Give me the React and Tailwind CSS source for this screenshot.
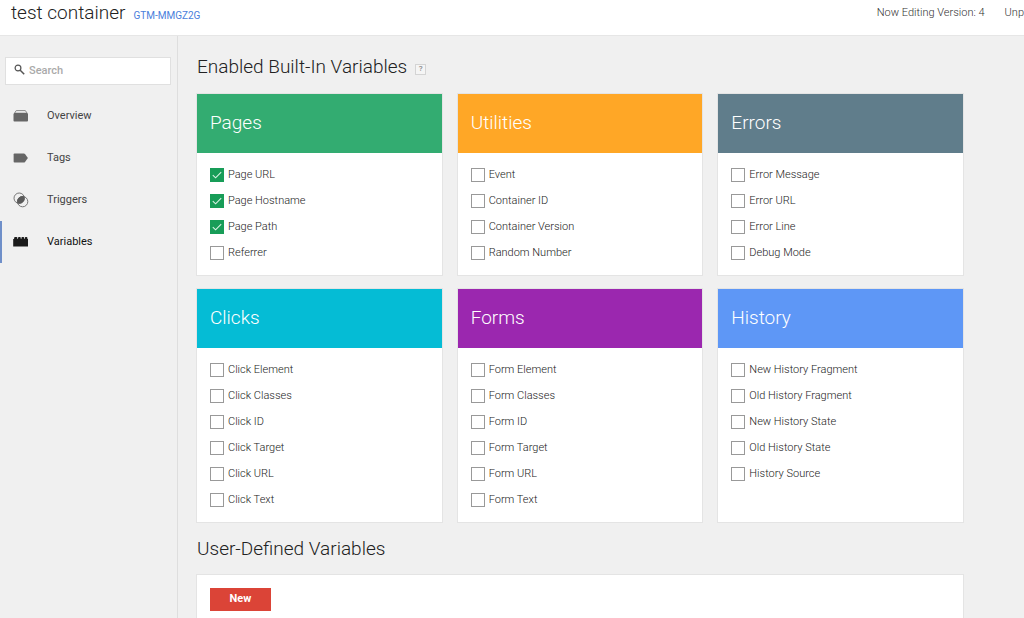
import React from 'react'
import clsx from 'clsx'

const OverviewIcon = () => (
  <svg width="16" height="14" viewBox="0 0 16 14">
    <path d="M1.8 3.8 3.2 1.6h9.2l1.4 2.2" fill="none" stroke="#8a8a8a" strokeWidth="1" />
    <path d="M1.4 3.8h12.8l.8 1.2v6.6q0 .9-.9.9H1.4q-.9 0-.9-.9V5z" fill="#666" />
  </svg>
)

const TagsIcon = () => (
  <svg width="16" height="14" viewBox="0 0 16 14">
    <path d="M1.5 2.5h9.4q.7 0 1.1.5l2.9 4-2.9 4q-.4.5-1.1.5H1.5q-.9 0-.9-.9V3.4q0-.9.9-.9z" fill="#666" />
  </svg>
)

const TriggersIcon = () => (
  <svg width="16" height="16" viewBox="0 0 16 16">
    <circle cx="6.2" cy="6.2" r="5.2" fill="none" stroke="#777" strokeWidth="1" />
    <circle cx="9.6" cy="9.6" r="5.2" fill="none" stroke="#777" strokeWidth="1" />
    <path d="M11.3 4.5A5.3 5.3 0 0 0 4.5 11.3 5.3 5.3 0 0 0 11.3 4.5z" fill="#5a5a5a" />
  </svg>
)

const VariablesIcon = () => (
  <svg width="16" height="14" viewBox="0 0 16 14">
    <path d="M.2 4h.9V3q0-1 1-1h1.3q1 0 1 1v1h.6V3q0-1 1-1h.8q1 0 1 1v1h.6V3q0-1 1-1h.8q1 0 1 1v1h.6V3q0-1 1-1h.6q1 0 1 1v1h.6v7.4H.2z" fill="#1b1b1b" />
  </svg>
)

const navItems = [
  { label: 'Overview', icon: OverviewIcon },
  { label: 'Tags', icon: TagsIcon },
  { label: 'Triggers', icon: TriggersIcon },
  { label: 'Variables', icon: VariablesIcon, active: true },
]

const groups = [
  {
    title: 'Pages',
    color: 'bg-[#33ac71]',
    items: ['Page URL', 'Page Hostname', 'Page Path', 'Referrer'],
    enabled: ['Page URL', 'Page Hostname', 'Page Path'],
  },
  {
    title: 'Utilities',
    color: 'bg-[#ffa726]',
    items: ['Event', 'Container ID', 'Container Version', 'Random Number'],
  },
  {
    title: 'Errors',
    color: 'bg-[#607d8b]',
    items: ['Error Message', 'Error URL', 'Error Line', 'Debug Mode'],
  },
  {
    title: 'Clicks',
    color: 'bg-[#05bcd5]',
    items: ['Click Element', 'Click Classes', 'Click ID', 'Click Target', 'Click URL', 'Click Text'],
  },
  {
    title: 'Forms',
    color: 'bg-[#9b27af]',
    items: ['Form Element', 'Form Classes', 'Form ID', 'Form Target', 'Form URL', 'Form Text'],
  },
  {
    title: 'History',
    color: 'bg-[#5e97f6]',
    items: ['New History Fragment', 'Old History Fragment', 'New History State', 'Old History State', 'History Source'],
  },
]

const VariableCheckbox = ({ label, defaultChecked }) => (
  <label className="flex h-[26px] items-center gap-1 text-[11px] font-light text-[#222]">
    <span className="grid size-[14px] shrink-0">
      <input
        type="checkbox"
        defaultChecked={defaultChecked}
        className="peer col-start-1 row-start-1 size-[14px] appearance-none border border-[#999] bg-white checked:border-[#189d58] checked:bg-[#189d58]"
      />
      <svg
        viewBox="0 0 15 15"
        className="pointer-events-none invisible col-start-1 row-start-1 size-[14px] peer-checked:visible"
      >
        <path d="m3 7.6 3 2.9 6-6" fill="none" stroke="#d9f2e4" strokeWidth="1.2" />
      </svg>
    </span>
    <span>{label}</span>
  </label>
)

const VariableCard = ({ title, color, items, enabled = [] }) => (
  <section className="bg-white shadow-[0_0_0_1px_#e4e4e4]">
    <h3 className={clsx('flex h-[59px] items-center px-[13px] text-[19px] font-light text-white', color)}>{title}</h3>
    <ul className="px-[13px] py-[9px]">
      {items.map((item) => (
        <li key={item}>
          <VariableCheckbox label={item} defaultChecked={enabled.includes(item)} />
        </li>
      ))}
    </ul>
  </section>
)

const Header = () => (
  <header className="flex h-[35px] items-start justify-between overflow-hidden bg-white pl-[11px]">
    <div className="flex items-baseline gap-2">
      <h1 className="text-[19px] leading-[26px] font-light text-[#222]">test container</h1>
      <a href="#container" className="text-[10px] text-[#4a7edb]">GTM-MMGZ2G</a>
    </div>
    <div className="flex gap-5 text-[11px] leading-[26px] font-light whitespace-nowrap text-[#333]">
      <span>Now Editing Version: 4</span>
      <span>Unp</span>
    </div>
  </header>
)

const Sidebar = () => (
  <aside className="w-[178px] shrink-0 border-r border-[#dedede] pt-[21px]">
    <div className="mr-[6px] ml-[5px] flex h-7 items-center gap-1 border border-[#e0e0e0] bg-white px-2">
      <svg width="11" height="11" viewBox="0 0 11 11" fill="none" stroke="#555" className="mb-1 shrink-0">
        <circle cx="4" cy="4" r="2.9" strokeWidth="1.2" />
        <path d="m6.2 6.2 4 4" strokeWidth="1.5" />
      </svg>
      <input
        type="text"
        aria-label="Search"
        placeholder="Search"
        className="w-full min-w-0 text-[11px] font-medium outline-none placeholder:text-[#aaa]"
      />
    </div>
    <nav className="mt-[10px]">
      {navItems.map(({ label, icon: Icon, active }) => (
        <a
          key={label}
          href={`#${label.toLowerCase()}`}
          className={clsx(
            'flex h-[42px] items-center border-l-2 pl-[11px] text-[11px]',
            active ? 'border-[#6f8fc9] text-[#111]' : 'border-transparent text-[#444]'
          )}
        >
          <span className="w-[34px]">
            <Icon />
          </span>
          {label}
        </a>
      ))}
    </nav>
  </aside>
)

const App = () => {
  return (
    <div className="flex min-h-screen flex-col bg-[#f0f0f0] font-['Roboto',sans-serif]">
      <Header />
      <div className="flex flex-1 border-t border-[#e6e6e6]">
        <Sidebar />
        <main className="flex flex-1 flex-col pt-[17px] pr-[61px] pl-[19px]">
          <div className="flex items-center gap-2">
            <h2 className="text-[19px] leading-7 font-light text-[#222]">Enabled Built-In Variables</h2>
            <button
              type="button"
              aria-label="Help"
              className="mt-1 flex size-[11px] items-center justify-center border border-[#d4d4d4] bg-[#f5f5f5] text-[8px] leading-none font-medium text-[#888]"
            >
              ?
            </button>
          </div>
          <div className="mt-[13px] grid grid-cols-3 gap-x-4 gap-y-[14px]">
            {groups.map((group) => (
              <VariableCard key={group.title} {...group} />
            ))}
          </div>

          <h2 className="mt-[13px] text-[19px] leading-7 font-light text-[#222]">User-Defined Variables</h2>
          <div className="mt-3 flex-1 bg-white px-[13px] pt-[13px] shadow-[0_0_0_1px_#e4e4e4]">
            <button type="button" className="block h-[23px] w-[61px] bg-[#db4437] text-[11px] font-bold text-white">
              New
            </button>
          </div>
        </main>
      </div>
    </div>
  )
}

export default App
